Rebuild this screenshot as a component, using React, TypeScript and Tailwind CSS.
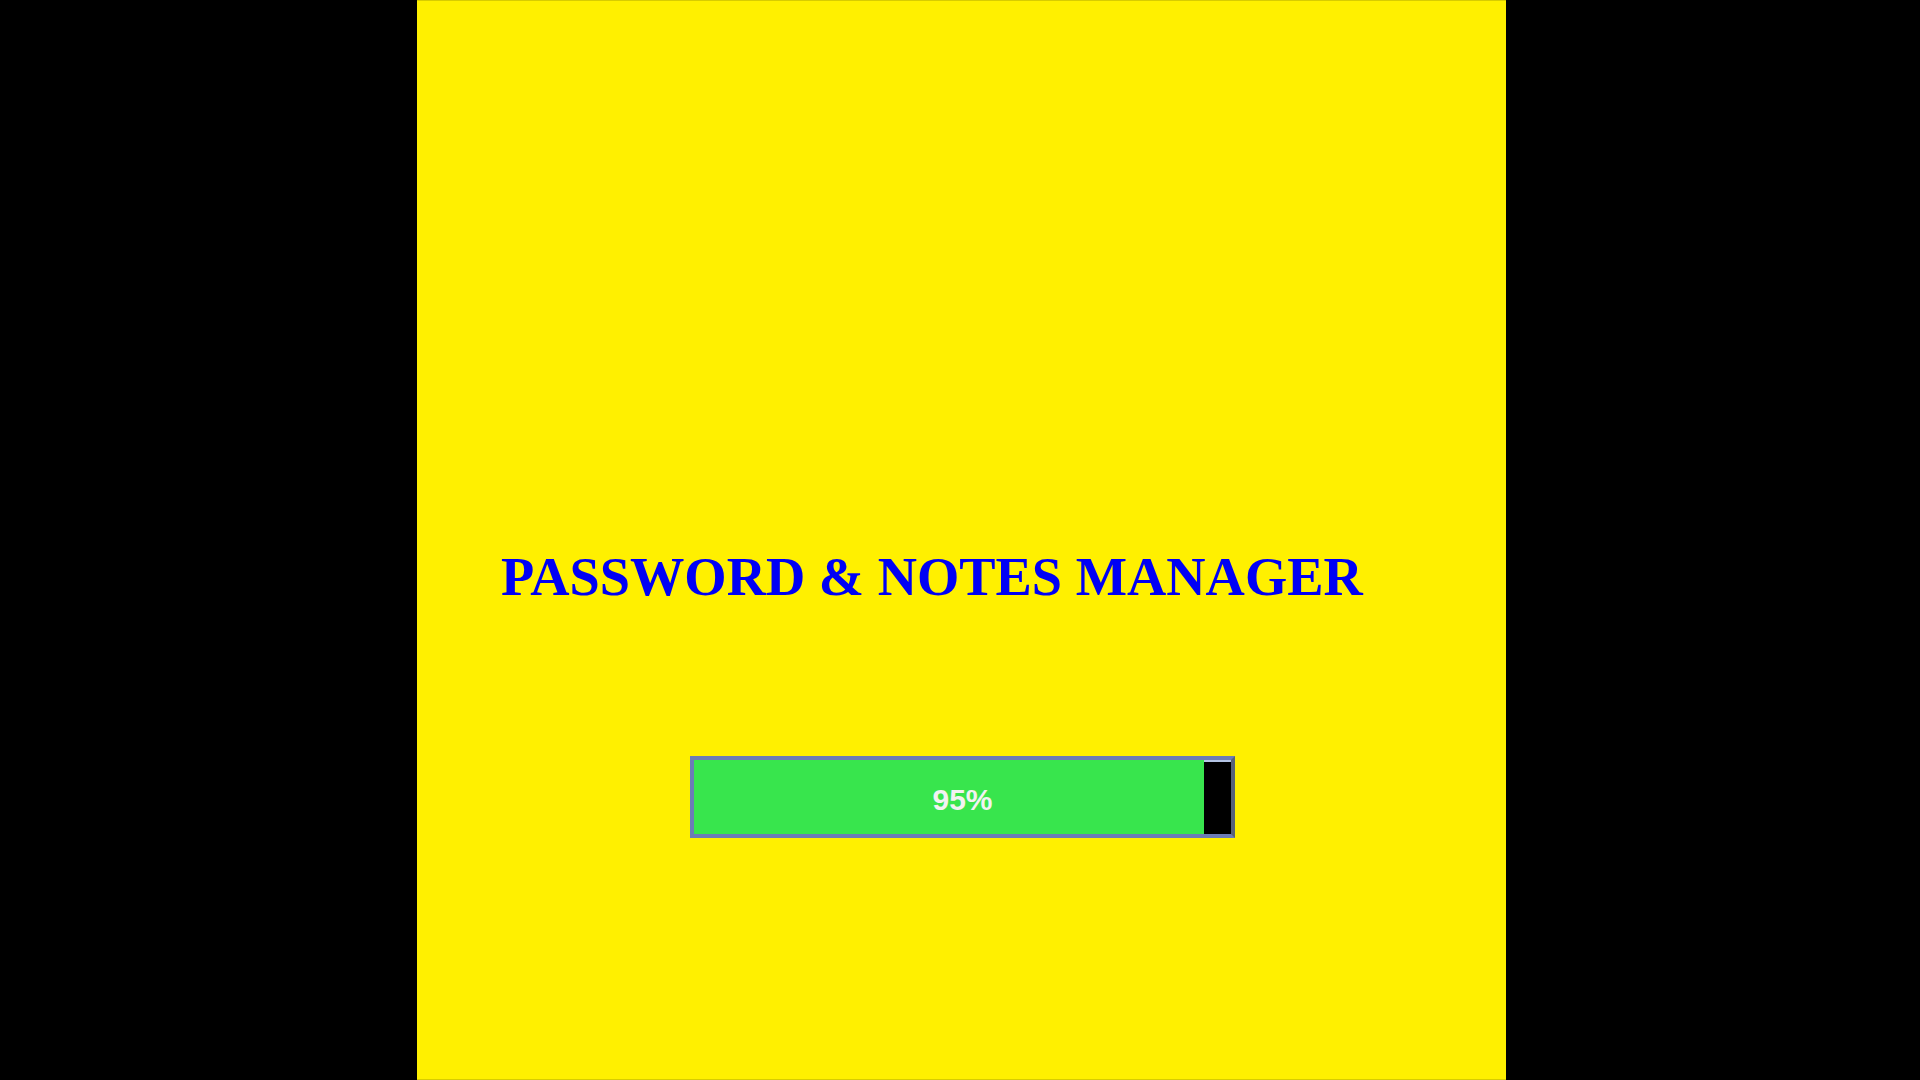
import React from "react";

const progress = 95;

export default function App() {
  return (
    <div className="flex h-[1080px] w-[1920px] justify-start bg-black">
      <div className="ml-[417px] flex h-full w-[1089px] flex-col border-y border-[#d8cc00] bg-[#fff000]">
        <h1 className="mt-[545px] pl-[84px] font-['Liberation_Serif','Times_New_Roman',serif] text-[54.4px] font-bold leading-[62px] whitespace-nowrap text-[#0000f5]">
          PASSWORD &amp; NOTES MANAGER
        </h1>
        <div className="mx-auto mt-[148px] flex h-[82px] w-[545px] translate-x-[1px]">
          <div className="relative flex h-full w-full border-y-4 border-l-4 border-r-4 border-[#6c7cb6] border-r-[#58627a]">
            <div className="h-full bg-[#38e54d]" style={{ width: `${progress}%` }} />
            <div className="h-full flex-1 border-t-2 border-[#b4c4e4] bg-black" />
            <span className="absolute inset-0 flex items-center justify-center pt-[4px] font-['Liberation_Sans',Arial,sans-serif] text-[30px] font-bold text-[#f2f2f2]">
              {progress}%
            </span>
          </div>
        </div>
      </div>
    </div>
  );
}
